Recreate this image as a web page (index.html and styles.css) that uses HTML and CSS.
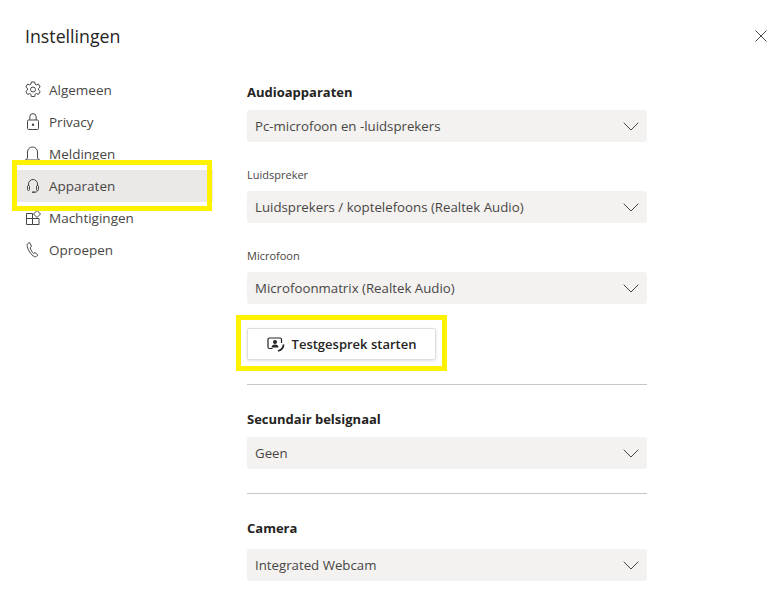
FILE: index.html
```html
<!DOCTYPE html>
<html lang="nl">

<head>
    <meta charset="UTF-8">
    <title>Instellingen</title>
    <link rel="stylesheet" href="styles.css">
</head>

<body>
    <div class="dialog">
        <header class="dialog-head">
            <h1>Instellingen</h1>
            <button class="close-btn" aria-label="Sluiten">
                <svg width="12" height="12" viewBox="0 0 12 12"><path d="M.5.5l11 11M11.500.5l-11 11" /></svg>
            </button>
        </header>

        <div class="dialog-body">
            <nav class="side-nav">
                <a class="nav-item">
                    <svg class="nav-icon" viewBox="0 0 18 18"><path d="M7.300 1h3.400l.4 2.200 1.300.7 2.100-.8 1.700 2.900-1.700 1.500v1.500l1.700 1.500-1.700 2.900-2.100-.8-1.300.7-.4 2.200H7.300l-.4-2.200-1.300-.7-2.100.8-1.700-2.900 1.700-1.500V7.500L1.800 6l1.700-2.900 2.100.8 1.300-.7z" /><circle cx="9" cy="8.500" r="2.500" /></svg>
                    Algemeen
                </a>
                <a class="nav-item">
                    <svg class="nav-icon" viewBox="0 0 18 18"><rect x="3.500" y="7" width="11" height="9.500" rx="1.200" /><path d="M5.800 7V3.800a3.200 3.200 0 0 1 6.400 0V7" /><circle class="fill" cx="9" cy="11.800" r="1.200" /></svg>
                    Privacy
                </a>
                <a class="nav-item">
                    <svg class="nav-icon" viewBox="0 0 18 18"><path d="M3.500 13V7a5 5 0 0 1 10 0v6l2 2h-14z" /><path d="M6.500 15.500a2.200 2.200 0 0 0 4 0" /></svg>
                    Meldingen
                </a>
                <a class="nav-item is-active marked">
                    <svg class="nav-icon" viewBox="0 0 18 18"><path d="M4.500 9V7a4.500 4.500 0 0 1 9 0v2" /><rect x="3.500" y="8.500" width="2" height="5" rx="1" /><rect x="12.500" y="8.500" width="2" height="5" rx="1" /><path d="M13.500 13.500c0 1-1.200 1.700-3 1.700" /><ellipse class="fill" cx="9.500" cy="15.200" rx="1.500" ry=".9" /></svg>
                    Apparaten
                </a>
                <a class="nav-item">
                    <svg class="nav-icon" viewBox="0 0 18 18"><path d="M2.500 4.500h6v11h-6zM2.500 9.500h12.500v6H8.500M15 9.500" /><path d="M13 1.500L16.500 5 13 8.500 9.500 5z" /></svg>
                    Machtigingen
                </a>
                <a class="nav-item">
                    <svg class="nav-icon" viewBox="0 0 18 18"><path d="M5.500 1.500L3.700 2.700C3 3.300 3 4.500 3.300 5.700c.8 3.500 3.500 8 6.800 9.800 1 .5 2 .4 2.700-.3l1-1-2.800-2.700-1.400 1c-1.300-1-3-3.800-3.400-6l1.400-1.200z" /></svg>
                    Oproepen
                </a>
            </nav>

            <main class="settings">
                <section class="group">
                    <h2>Audioapparaten</h2>
                    <div class="select">Pc-microfoon en -luidsprekers <svg class="chevron" viewBox="0 0 16 9"><path d="M.7.7L8 8l7.300-7.300" /></svg></div>
                    <label>Luidspreker</label>
                    <div class="select">Luidsprekers / koptelefoons (Realtek Audio) <svg class="chevron" viewBox="0 0 16 9"><path d="M.7.7L8 8l7.300-7.300" /></svg></div>
                    <label>Microfoon</label>
                    <div class="select">Microfoonmatrix (Realtek Audio) <svg class="chevron" viewBox="0 0 16 9"><path d="M.7.7L8 8l7.300-7.300" /></svg></div>
                    <button class="test-btn marked">
                        <svg class="btn-icon" viewBox="0 0 18 15"><path d="M5.500 11.500H2.500a1.500 1.500 0 0 1-1.500-1.500V2.500A1.500 1.500 0 0 1 2.500 1h10.500a1.500 1.500 0 0 1 1.500 1.500V6" /><circle class="fill" cx="8" cy="5" r="2" /><path class="fill" d="M4.500 10.500c0-2 1.500-3 3.500-3s3.500 1 3.500 3z" /><path class="handset" d="M16.500 7.500c0 3-2 5.500-5.500 6.500" /></svg>
                        Testgesprek starten
                    </button>
                </section>

                <section class="group">
                    <h2>Secundair belsignaal</h2>
                    <div class="select">Geen <svg class="chevron" viewBox="0 0 16 9"><path d="M.7.7L8 8l7.300-7.300" /></svg></div>
                </section>

                <section class="group">
                    <h2>Camera</h2>
                    <div class="select">Integrated Webcam <svg class="chevron" viewBox="0 0 16 9"><path d="M.7.7L8 8l7.300-7.300" /></svg></div>
                </section>
            </main>
        </div>
    </div>
</body>

</html>
```

FILE: styles.css
```css
html,
body {
    margin: 0;
    height: 593px;
    overflow: hidden;
    background: #fff;
}

body {
    font-family: "Open Sans", "Noto Sans", sans-serif;
    font-size: 13.25px;
    color: #484644;
}

.dialog-head {
    display: flex;
    justify-content: space-between;
    align-items: center;
    height: 74px;
    padding: 0 16px 0 25px;
}

.dialog-head h1 {
    margin: 0 0 2px;
    font-size: 17.75px;
    font-weight: 500;
    color: #252423;
}

.close-btn {
    display: flex;
    margin-bottom: 2px;
    padding: 0;
    border: none;
    background: none;
}

.close-btn svg {
    stroke: #484644;
    fill: none;
}

.dialog-body {
    display: flex;
}

.side-nav {
    display: flex;
    flex-direction: column;
    width: 196px;
    margin-left: 17px;
    margin-right: 34px;
}

.nav-item {
    display: flex;
    align-items: center;
    gap: 7px;
    height: 32px;
    padding-left: 7px;
    font-size: 13.5px;
}

.nav-icon {
    flex: none;
    width: 18px;
    height: 18px;
    fill: none;
    stroke: #484644;
    stroke-width: 1;
}

.fill {
    fill: #484644;
    stroke: none;
}

.is-active {
    background: #ebe9e8;
}

/* white gap between the yellow frame and the grey row */
.nav-item.marked {
    position: relative;
    box-shadow: 0 -5px 0 #fff, 0 4px 0 #fff;
}

.marked::after {
    content: "";
    position: absolute;
    border: 5px solid #fff200;
    pointer-events: none;
}

.nav-item.marked::after {
    top: -10px;
    bottom: -9px;
    left: -5px;
    right: 1px;
}

.settings {
    width: 400px;
}

.group {
    display: flex;
    flex-direction: column;
    align-items: flex-start;
}

.group + .group {
    padding-top: 25px;
    border-top: 1px solid #c8c6c4;
}

h2 {
    margin: 0;
    font-size: 13px;
    font-weight: 700;
    line-height: 18px;
    color: #252423;
}

.settings > .group:first-child {
    padding-bottom: 24px;
}

.settings > .group:first-child h2 {
    margin-top: 9px;
    margin-bottom: 9px;
}

.group:nth-child(2) {
    padding-bottom: 24px;
}

.group:nth-child(2) h2 {
    margin-bottom: 9px;
}

.group:nth-child(3) h2 {
    margin-bottom: 12px;
}

label {
    margin-top: 23.5px;
    margin-bottom: 7.5px;
    font-size: 11px;
    line-height: 18px;
}

.select {
    display: flex;
    justify-content: space-between;
    align-items: center;
    box-sizing: border-box;
    width: 100%;
    height: 32px;
    padding: 0 8px;
    border-radius: 3px;
    background: #f3f2f1;
}

.chevron {
    width: 16px;
    height: 9px;
    fill: none;
    stroke: #484644;
}

.test-btn {
    position: relative;
    display: flex;
    justify-content: center;
    align-items: center;
    gap: 7px;
    width: 189px;
    height: 32px;
    margin-top: 24px;
    padding: 0;
    border: 1px solid #e1dfdd;
    border-radius: 2px;
    background: #fff;
    box-shadow: 0 1px 3px rgba(0, 0, 0, 0.12);
    font-family: inherit;
    font-size: 13px;
    font-weight: 600;
    color: #252423;
}

.test-btn.marked::after {
    top: -14px;
    bottom: -12px;
    left: -12px;
    right: -12px;
}

.btn-icon {
    width: 18px;
    height: 15px;
    fill: none;
    stroke: #252423;
    stroke-width: 1.2;
}

.btn-icon .fill {
    fill: #252423;
}

.btn-icon .handset {
    stroke-width: 1.8;
}
```
